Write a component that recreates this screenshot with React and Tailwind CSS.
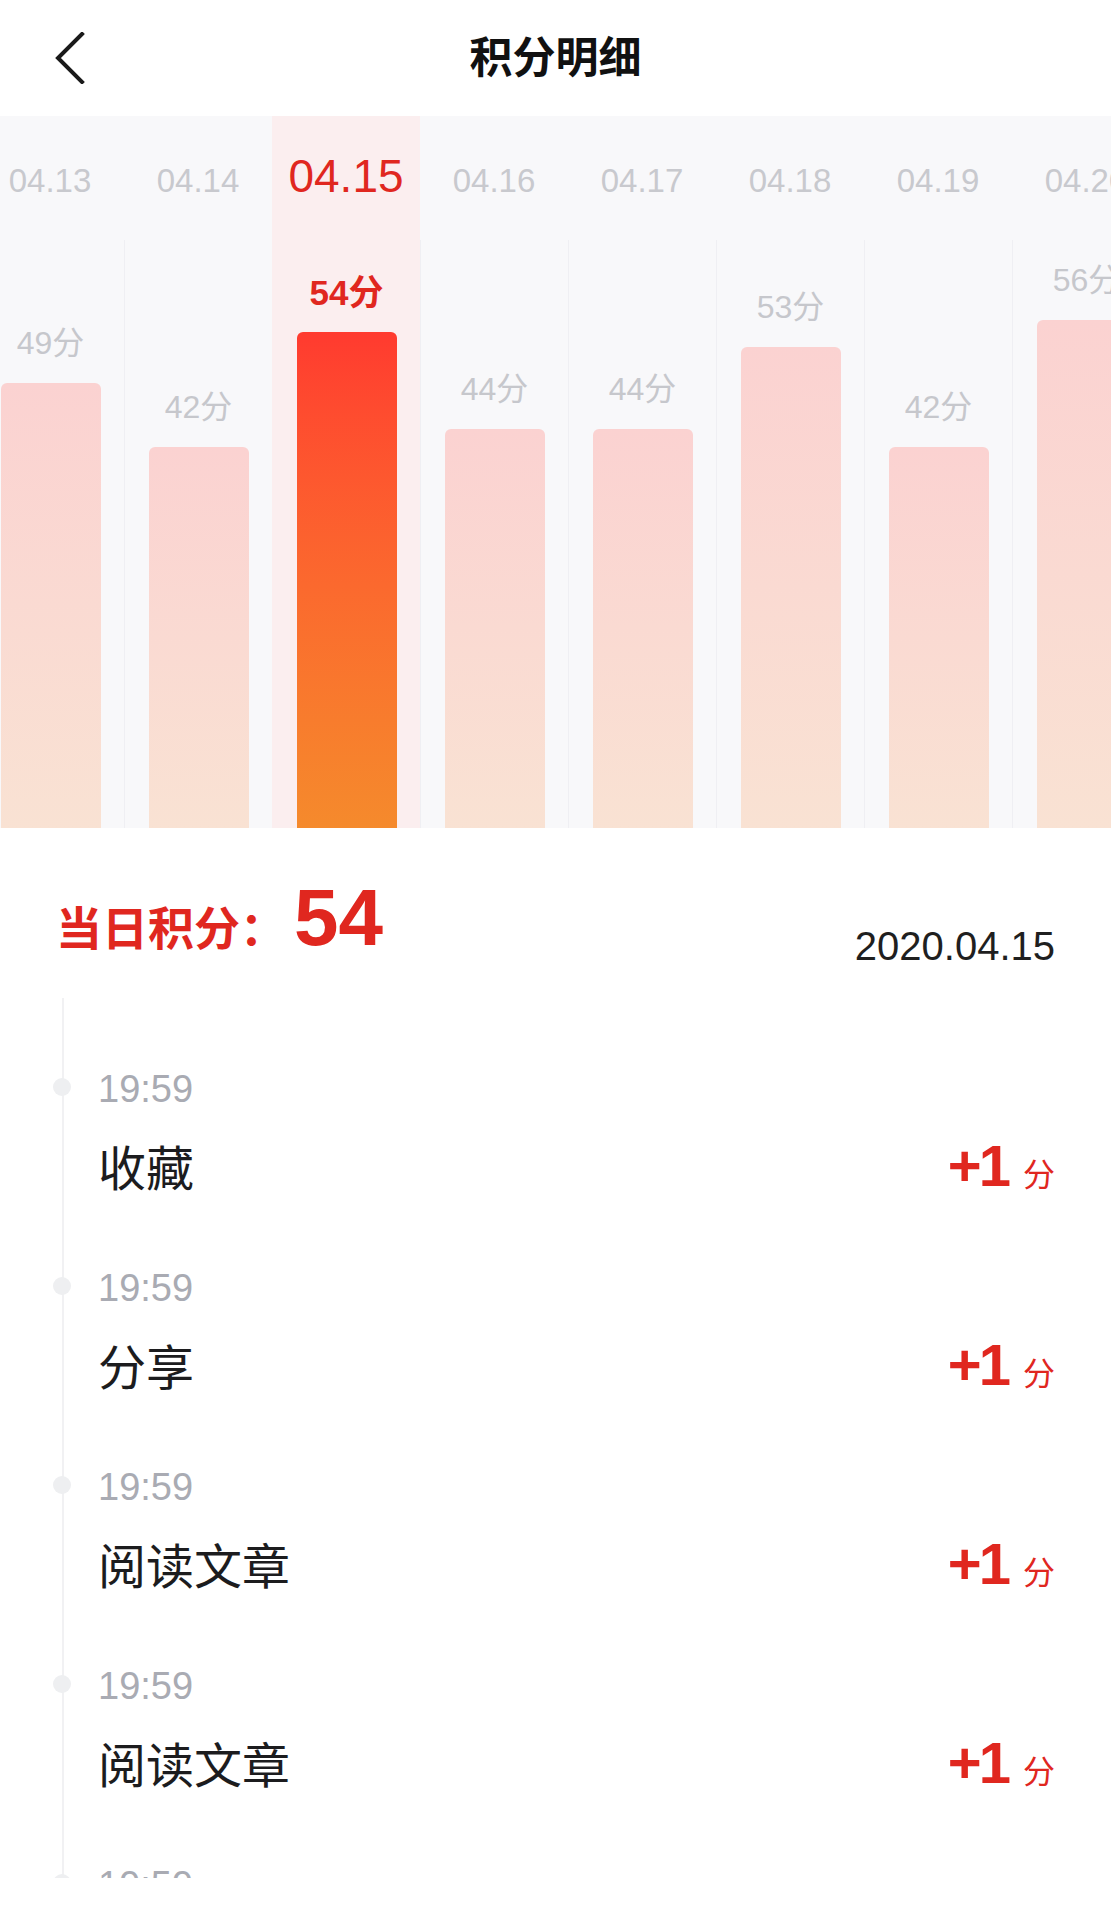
const days = [
  { date: "04.13", value: 49, h: 445 },
  { date: "04.14", value: 42, h: 381 },
  { date: "04.15", value: 54, h: 496, active: true },
  { date: "04.16", value: 44, h: 399 },
  { date: "04.17", value: 44, h: 399 },
  { date: "04.18", value: 53, h: 481 },
  { date: "04.19", value: 42, h: 381 },
  { date: "04.20", value: 56, h: 508 },
];

const records = [
  { time: "19:59", name: "收藏", points: 1 },
  { time: "19:59", name: "分享", points: 1 },
  { time: "19:59", name: "阅读文章", points: 1 },
  { time: "19:59", name: "阅读文章", points: 1 },
  { time: "19:59", name: "阅读文章", points: 1 },
];

function DayColumn({ day }) {
  const active = day.active;
  return (
    <div className={`w-[148px] shrink-0 h-full flex flex-col ${active ? "bg-[#fbeeef]" : ""}`}>
      <div className="h-[124px] flex justify-center">
        {active ? (
          <span className="mt-[37px] text-[46px] leading-none text-[#e0271f]">{day.date}</span>
        ) : (
          <span className="mt-[48px] text-[33px] leading-none text-[#c8c9ce]">{day.date}</span>
        )}
      </div>
      <div
        className={`flex-1 flex flex-col items-center justify-end border-l ${
          active ? "border-transparent" : "border-[#efeff3]"
        }`}
      >
        {active ? (
          <span className="mb-[22px] text-[35px] leading-none font-bold text-[#e0271f]">{day.value}分</span>
        ) : (
          <span className="mb-[24px] text-[32px] leading-none text-[#c6c7cc]">{day.value}分</span>
        )}
        <div
          className={`w-[100px] rounded-t-[6px] bg-linear-to-b ${
            active ? "from-[#ff3a2f] to-[#f58a2c]" : "from-[#fbd2d1] to-[#f9e2d3]"
          }`}
          style={{ height: day.h }}
        />
      </div>
    </div>
  );
}

function RecordRow({ item }) {
  return (
    <div className="relative pl-[34px] pb-[74px]">
      <span className="absolute -left-[11px] top-[8px] w-[18px] h-[18px] rounded-full bg-[#eeeff1]" />
      <div className="text-[38px] leading-none text-[#a9abb3]">{item.time}</div>
      <div className="mt-[29px] flex items-baseline justify-between pr-[56px]">
        <span className="text-[48px] leading-none text-[#1c1c1e]">{item.name}</span>
        <span className="flex items-baseline text-[#e0271f]">
          <span className="text-[58px] leading-none font-bold tracking-[-3px]">+{item.points}</span>
          <span className="ml-[15px] text-[32px] leading-none">分</span>
        </span>
      </div>
    </div>
  );
}

export default function App() {
  return (
    <div className="w-[1111px] h-[1920px] overflow-hidden bg-white font-['Liberation_Sans','Noto_Sans_CJK_SC',sans-serif]">
      <header className="h-[116px] grid grid-cols-[1fr_auto_1fr] items-center">
        <div className="pl-[54px] flex items-center">
          <svg width="32" height="52" viewBox="0 0 32 52" fill="none">
            <path d="M28 2 L4 26 L28 50" stroke="#1a1a1a" strokeWidth="4" strokeLinecap="square" strokeLinejoin="miter" />
          </svg>
        </div>
        <h1 className="text-[43px] leading-none font-bold text-[#111]">积分明细</h1>
        <div />
      </header>

      <section className="h-[712px] bg-[#f8f8fa] overflow-hidden">
        <div className="-ml-[24px] h-full flex">
          {days.map((d) => (
            <DayColumn key={d.date} day={d} />
          ))}
        </div>
      </section>

      <section className="px-[56px] pt-[50px] flex items-start justify-between">
        <div className="flex items-baseline text-[#e0271f] font-bold">
          <span className="text-[46px] leading-none">当日积分：</span>
          <span className="ml-[8px] text-[80px] leading-none">54</span>
        </div>
        <span className="mt-[48px] text-[40px] leading-none text-[#1f1f1f]">2020.04.15</span>
      </section>

      <div className="mt-[32px] pl-[52px] h-[880px] overflow-hidden">
        <div className="ml-[10px] border-l-2 border-[#f1f1f3] pt-[72px]">
          {records.map((r, i) => (
            <RecordRow key={i} item={r} />
          ))}
        </div>
      </div>
    </div>
  );
}
